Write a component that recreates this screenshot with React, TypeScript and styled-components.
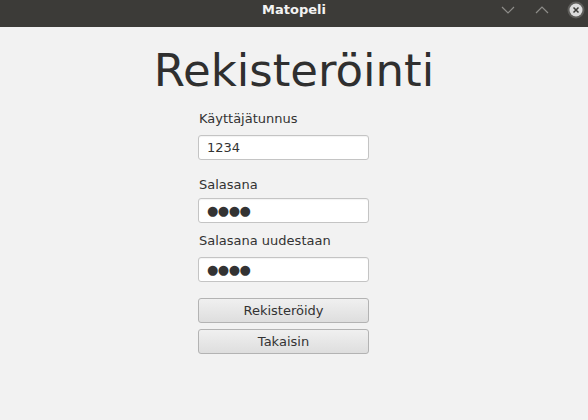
import React from "react";
import styled, { createGlobalStyle } from "styled-components";

const Global = createGlobalStyle`
  html, body { margin: 0; padding: 0; }
  body {
    width: 588px;
    height: 420px;
    overflow: hidden;
    background: #f2f2f2;
    font-family: "DejaVu Sans", Verdana, sans-serif;
  }
  #root { width: 588px; height: 420px; }
`;

const Window = styled.div`
  width: 588px;
  height: 420px;
  display: flex;
  flex-direction: column;
  background: #f2f2f2;
`;

const TitleBar = styled.div`
  height: 27px;
  flex: none;
  background: #3c3b38;
  display: grid;
  grid-template-columns: 1fr auto 1fr;
  align-items: start;
`;

const Title = styled.div`
  grid-column: 2;
  font-family: "DejaVu Sans", sans-serif;
  font-weight: bold;
  font-size: 13px;
  line-height: 20px;
  color: #f3f3f3;
`;

const Controls = styled.div`
  grid-column: 3;
  justify-self: end;
  display: flex;
  align-items: center;
  gap: 14px;
  height: 19px;
  padding-right: 2px;
`;

const CtlButton = styled.div`
  width: 20px;
  height: 19px;
  display: flex;
  align-items: center;
  justify-content: center;
`;

const Content = styled.div`
  flex: 1;
  display: flex;
  flex-direction: column;
`;

const Heading = styled.h1`
  margin: 18px 0 0;
  font-family: "DejaVu Sans", sans-serif;
  font-weight: normal;
  font-size: 45px;
  line-height: 52px;
  color: #2f2f2f;
  text-align: center;
`;

const Form = styled.div`
  display: flex;
  flex-direction: column;
  width: 171px;
  margin-left: 198px;
`;

const Label = styled.label<{ $mt: number }>`
  display: block;
  margin-top: ${(p) => p.$mt}px;
  margin-left: 1px;
  font-size: 13px;
  line-height: 16px;
  color: #333333;
`;

const Field = styled.input<{ $mt: number; $dots?: boolean }>`
  box-sizing: border-box;
  width: 171px;
  height: 25px;
  margin: ${(p) => p.$mt}px 0 0;
  padding: 0 8px;
  border: 1px solid #c4c4c4;
  border-radius: 3px;
  background: #ffffff;
  box-shadow: inset 0 1px 1px rgba(0, 0, 0, 0.05);
  font-family: "DejaVu Sans", sans-serif;
  font-size: 13px;
  letter-spacing: ${(p) => (p.$dots ? "-0.5px" : "0")};
  color: #333333;
  outline: none;
`;

const Button = styled.button<{ $mt: number }>`
  box-sizing: border-box;
  width: 171px;
  height: 25px;
  margin-top: ${(p) => p.$mt}px;
  padding: 0;
  border: 1px solid #b3b3b3;
  border-radius: 3px;
  background: linear-gradient(#f0f0f0, #dedede);
  font-family: "DejaVu Sans", sans-serif;
  font-size: 13px;
  color: #333333;
  cursor: default;
`;

const Chevron = ({ up }: { up?: boolean }) => (
  <svg width="14" height="8" viewBox="0 0 14 8">
    <path
      d={up ? "M1 7 L7 1 L13 7" : "M1 1 L7 7 L13 1"}
      fill="none"
      stroke="#8e8d8a"
      strokeWidth="1.2"
    />
  </svg>
);

const CloseIcon = () => (
  <svg width="18" height="18" viewBox="0 0 18 18">
    <circle cx="9" cy="9" r="8.5" fill="#5e5d5a" />
    <circle cx="9" cy="9" r="6.5" fill="#dcdcdc" />
    <path d="M6.5 6.5 L11.5 11.5 M11.5 6.5 L6.5 11.5" stroke="#3c3b38" strokeWidth="1.5" />
  </svg>
);

export default function App() {
  return (
    <>
      <Global />
      <Window>
        <TitleBar>
          <Title>Matopeli</Title>
          <Controls>
            <CtlButton>
              <Chevron />
            </CtlButton>
            <CtlButton>
              <Chevron up />
            </CtlButton>
            <CtlButton>
              <CloseIcon />
            </CtlButton>
          </Controls>
        </TitleBar>
        <Content>
          <Heading>Rekisteröinti</Heading>
          <Form>
            <Label $mt={14}>Käyttäjätunnus</Label>
            <Field $mt={8} type="text" readOnly value="1234" />
            <Label $mt={17}>Salasana</Label>
            <Field $mt={5} $dots type="text" readOnly value="●●●●" />
            <Label $mt={10}>Salasana uudestaan</Label>
            <Field $mt={8} $dots type="text" readOnly value="●●●●" />
            <Button $mt={16}>Rekisteröidy</Button>
            <Button $mt={6}>Takaisin</Button>
          </Form>
        </Content>
      </Window>
    </>
  );
}
